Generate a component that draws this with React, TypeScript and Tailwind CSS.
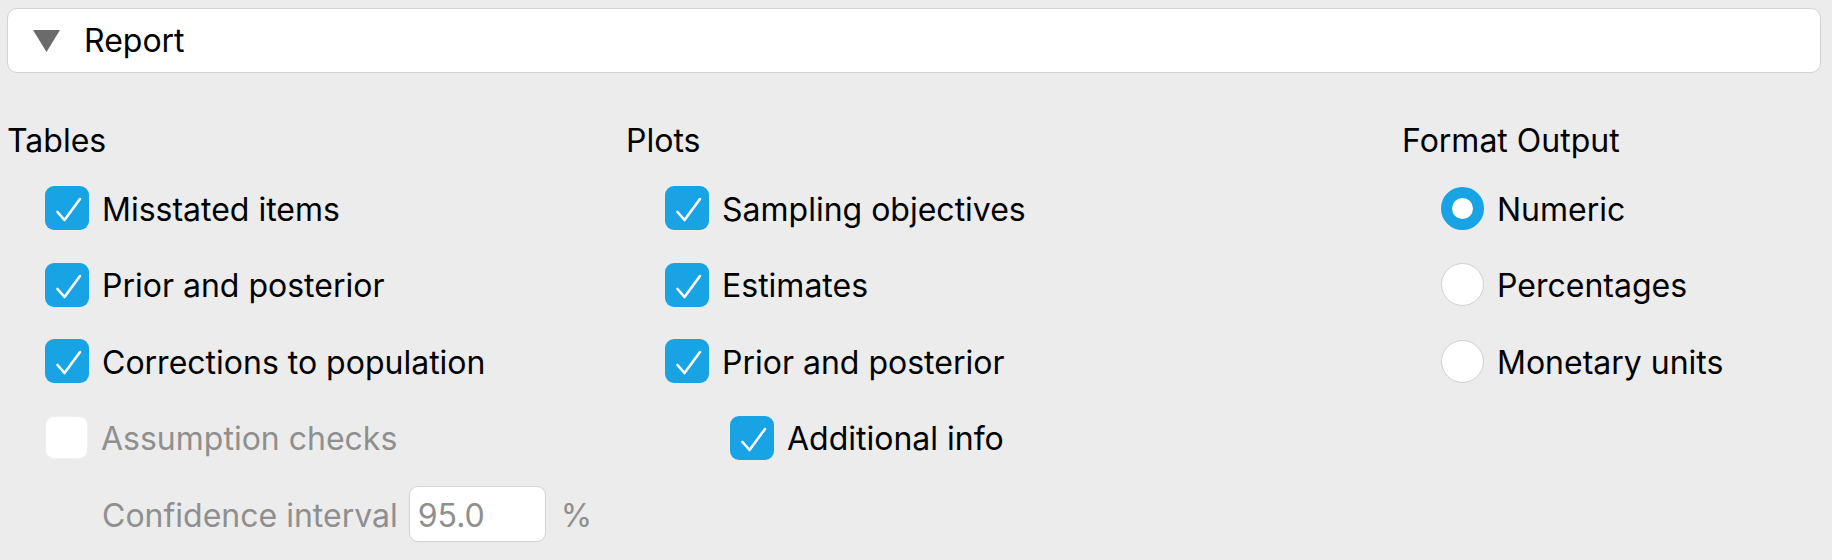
import React from 'react';

type Item = { label: string; checked?: boolean; disabled?: boolean; indent?: boolean };

function CheckBox({ checked, disabled }: { checked?: boolean; disabled?: boolean }) {
  if (checked) {
    return (
      <div className="w-[44px] h-[44px] rounded-[9px] bg-[#17a3e4] flex items-center justify-center shrink-0">
        <svg width="44" height="44" viewBox="0 0 44 44" fill="none">
          <path d="M12.5 26 L19.5 34 L35 13" stroke="white" strokeWidth="2.6" strokeLinecap="round" strokeLinejoin="round" />
        </svg>
      </div>
    );
  }
  return (
    <div
      className={`w-[43px] h-[43px] rounded-[9px] bg-white shrink-0 border ${
        disabled ? 'border-[#f0f0f0]' : 'border-[#cfcfcf]'
      }`}
    />
  );
}

function Radio({ selected }: { selected?: boolean }) {
  if (selected) {
    return <div className="w-[43px] h-[43px] rounded-full border-[11px] border-[#17a3e4] bg-white shrink-0" />;
  }
  return <div className="w-[43px] h-[43px] rounded-full border-[1.5px] border-[#d0d0d0] bg-white shrink-0" />;
}

function Row({ children, indent }: { children: React.ReactNode; indent?: string }) {
  return <div className={`h-[76.5px] flex items-center gap-[13px] ${indent ?? 'pl-[38px]'}`}>{children}</div>;
}

export default function App() {
  const tables: Item[] = [
    { label: 'Misstated items', checked: true },
    { label: 'Prior and posterior', checked: true },
    { label: 'Corrections to population', checked: true },
    { label: 'Assumption checks', disabled: true },
  ];
  const plots: Item[] = [
    { label: 'Sampling objectives', checked: true },
    { label: 'Estimates', checked: true },
    { label: 'Prior and posterior', checked: true },
    { label: 'Additional info', checked: true, indent: true },
  ];
  const formats = ['Numeric', 'Percentages', 'Monetary units'];

  return (
    <div
      className="w-[1832px] h-[560px] bg-[#ececec] text-black overflow-hidden"
      style={{ fontFamily: 'Inter, "Noto Sans", sans-serif' }}
    >
      <div className="pt-[8px] pl-[7px] pr-[11px]">
        {/* Section header */}
        <div className="h-[65px] bg-white border-[1.5px] border-[#d2d2d2] rounded-[10px] flex items-center pl-[25px]">
          <svg width="27" height="22" viewBox="0 0 27 22" className="shrink-0">
            <polygon points="0,0 27,0 13.5,22" fill="#6b6b6b" />
          </svg>
          <span className="ml-[24px] text-[32px] leading-none">Report</span>
        </div>

        <div className="flex mt-[47px]">
          {/* Tables */}
          <div className="w-[619px]">
            <div className="h-[40px] flex items-center text-[32px] leading-none mb-[10px] pt-[2px]">Tables</div>
            {tables.map((t) => (
              <Row key={t.label}>
                <CheckBox checked={t.checked} disabled={t.disabled} />
                <span className={`text-[32px] leading-none pt-[3px] ${t.disabled ? 'text-[#8f8f8f]' : ''}`}>{t.label}</span>
              </Row>
            ))}
            <div className="h-[76.5px] flex items-center pl-[95px] text-[#8f8f8f] text-[32px] leading-none">
              <span className="pt-[3px]">Confidence interval</span>
              <div className="ml-[11px] w-[137px] h-[56px] bg-white border-[1.5px] border-[#d4d4d4] rounded-[9px] flex items-center pl-[8px] pt-[3px]">
                95.0
              </div>
              <span className="ml-[15px] pt-[3px]">%</span>
            </div>
          </div>

          {/* Plots */}
          <div className="w-[776px]">
            <div className="h-[40px] flex items-center text-[32px] leading-none mb-[10px] pt-[2px]">Plots</div>
            {plots.map((p) => (
              <Row key={p.label + (p.indent ? '-i' : '')} indent={p.indent ? 'pl-[104px]' : 'pl-[39px]'}>
                <CheckBox checked={p.checked} />
                <span className="text-[32px] leading-none pt-[3px]">{p.label}</span>
              </Row>
            ))}
          </div>

          {/* Format output */}
          <div className="flex-1">
            <div className="h-[40px] flex items-center text-[32px] leading-none mb-[10px] pt-[2px]">Format Output</div>
            {formats.map((f, i) => (
              <Row key={f} indent="pl-[39px]">
                <Radio selected={i === 0} />
                <span className="text-[32px] leading-none pt-[3px]">{f}</span>
              </Row>
            ))}
          </div>
        </div>
      </div>
    </div>
  );
}
